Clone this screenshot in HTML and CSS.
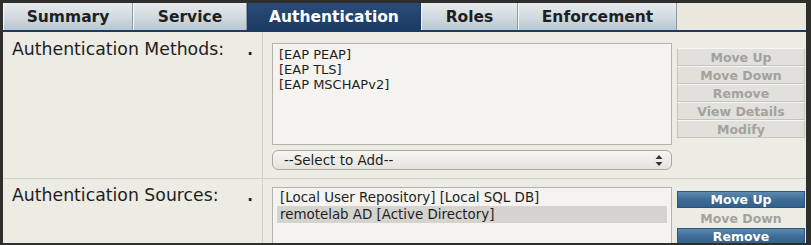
FILE: index.html
```html
<!DOCTYPE html>
<html lang="en">

<head>
    <meta charset="UTF-8">
    <title>Service - Authentication</title>
    <link rel="stylesheet" href="styles.css">
</head>

<body>
    <div class="frame">
        <div class="tabs">
            <div class="tab tab-summary">Summary</div>
            <div class="tab tab-service">Service</div>
            <div class="tab tab-auth active">Authentication</div>
            <div class="tab tab-roles">Roles</div>
            <div class="tab tab-enforcement">Enforcement</div>
            <div class="tab-filler"></div>
        </div>

        <div class="panel">
            <!-- Authentication methods -->
            <div class="row row-methods">
                <div class="row-label">
                    <span>Authentication Methods:</span>
                    <span class="marker">.</span>
                </div>
                <div class="row-content">
                    <div class="field">
                        <div class="listbox listbox-methods">
                            <div class="option">[EAP PEAP]</div>
                            <div class="option">[EAP TLS]</div>
                            <div class="option">[EAP MSCHAPv2]</div>
                        </div>
                        <div class="select">
                            <span>--Select to Add--</span>
                            <svg class="select-arrows" width="8" height="11" viewBox="0 0 8 11">
                                <path d="M4 0 L7.5 4 L0.5 4 Z" fill="#333" />
                                <path d="M4 11 L7.5 7 L0.5 7 Z" fill="#333" />
                            </svg>
                        </div>
                    </div>
                    <div class="buttons buttons-methods">
                        <div class="btn">Move Up</div>
                        <div class="btn">Move Down</div>
                        <div class="btn">Remove</div>
                        <div class="btn">View Details</div>
                        <div class="btn">Modify</div>
                    </div>
                </div>
            </div>

            <!-- Authentication sources -->
            <div class="row row-sources">
                <div class="row-label">
                    <span>Authentication Sources:</span>
                    <span class="marker">.</span>
                </div>
                <div class="row-content">
                    <div class="field">
                        <div class="listbox listbox-sources">
                            <div class="option">[Local User Repository] [Local SQL DB]</div>
                            <div class="option selected">remotelab AD [Active Directory]</div>
                        </div>
                    </div>
                    <div class="buttons buttons-sources">
                        <div class="btn btn-active">Move Up</div>
                        <div class="btn btn-plain">Move Down</div>
                        <div class="btn btn-active">Remove</div>
                    </div>
                </div>
            </div>
        </div>
    </div>
</body>

</html>
```

FILE: styles.css
```css
:root {
    --frame: #2e2e2c;
    --navy: #1d3a63;
    --panel: #ecebe4;
    --line: #d3d1c8;
    --list: #f4f3ef;
    --list-border: #b4b3ab;
    --text: #1e1e1e;
    --btn-off: #e1e0db;
    --btn-off-text: #a3a29d;
}

body {
    margin: 0;
    padding: 0;
    background-color: var(--frame);
    font-family: 'DejaVu Sans', Verdana, sans-serif;
}

.frame {
    width: 811px;
    height: 245px;
    box-sizing: border-box;
    border-style: solid;
    border-color: var(--frame);
    border-width: 3px 5px 2px 3px;
    background-color: var(--panel);
    overflow: hidden;
    display: flex;
    flex-direction: column;
}

/* tab strip */
.tabs {
    display: flex;
    height: 27px;
    border-bottom: 2px solid var(--navy);
    flex-shrink: 0;
}

.tab {
    box-sizing: border-box;
    display: flex;
    align-items: center;
    justify-content: center;
    font-weight: bold;
    font-size: 15.5px;
    color: #1f1f1f;
    background: linear-gradient(#e6eaec, #d2dbe0 50%, #b9c7d1);
    border-left: 1px solid #f4f6f7;
    border-right: 1px solid #8e9ba5;
}

.tab-summary { width: 130px; }
.tab-service { width: 114px; }
.tab-auth { width: 174px; }
.tab-roles { width: 97px; }
.tab-enforcement { width: 159px; }

.tab.active {
    color: #fff;
    background: linear-gradient(#2a4c78, #1c3a64);
    border-color: var(--navy);
}

.tab-filler {
    flex: 1;
    background-color: #e9e7de;
}

/* panel rows */
.panel {
    flex: 1;
    overflow: hidden;
}

.row {
    display: grid;
    grid-template-columns: 260px 1fr;
}

.row-methods {
    border-bottom: 1px solid var(--line);
}

.row-label {
    display: flex;
    justify-content: space-between;
    align-items: flex-start;
    border-right: 1px solid var(--line);
    padding: 7px 9px 0 9px;
    font-size: 17.3px;
    color: var(--text);
}

.row-sources .row-label {
    padding-top: 6px;
}

.marker {
    font-weight: bold;
    font-size: 15px;
    padding-top: 2px;
}

.row-content {
    display: flex;
    gap: 5px;
    padding-left: 9px;
}

.row-methods .row-content {
    padding-top: 11px;
    padding-bottom: 8px;
}

.row-sources .row-content {
    padding-top: 8px;
}

.field {
    width: 400px;
    display: flex;
    flex-direction: column;
    gap: 5px;
}

/* list boxes */
.listbox {
    box-sizing: border-box;
    background-color: var(--list);
    border: 1px solid var(--list-border);
    padding: 3px 4px;
    font-size: 13px;
    color: var(--text);
}

.listbox-methods {
    height: 102px;
}

.listbox-methods .option {
    line-height: 15px;
    padding-left: 2px;
}

.listbox-sources {
    height: 70px;
    padding-top: 1px;
    font-size: 13.4px;
}

.listbox-sources .option {
    line-height: 17px;
    padding-left: 3px;
}

.option.selected {
    background-color: #d4d3ce;
}

/* select */
.select {
    box-sizing: border-box;
    height: 20px;
    display: flex;
    align-items: center;
    justify-content: space-between;
    padding: 0 8px 0 11px;
    border: 1px solid #a9a8a1;
    border-radius: 6px;
    background: linear-gradient(#f6f5f1, #e4e3dd);
    font-size: 13.5px;
    color: var(--text);
}

.select-arrows {
    display: block;
}

/* action buttons */
.buttons {
    width: 128px;
    display: flex;
    flex-direction: column;
}

.buttons-methods {
    margin-top: 5px;
}

.buttons-sources {
    margin-top: 4px;
}

.btn {
    box-sizing: border-box;
    height: 18px;
    display: flex;
    align-items: center;
    justify-content: center;
    font-size: 12.5px;
    font-weight: bold;
    color: var(--btn-off-text);
    background-color: var(--btn-off);
    border: 1px solid #c4c3bc;
    border-top-color: #f7f6f3;
}

.btn-plain {
    background-color: transparent;
    border-color: transparent;
    height: 20px;
}

.btn-active {
    color: #fff;
    background: linear-gradient(#5f8ab0, #3d6c97 50%, #33618c);
    border-color: #2b5580;
    height: 17px;
}
```
